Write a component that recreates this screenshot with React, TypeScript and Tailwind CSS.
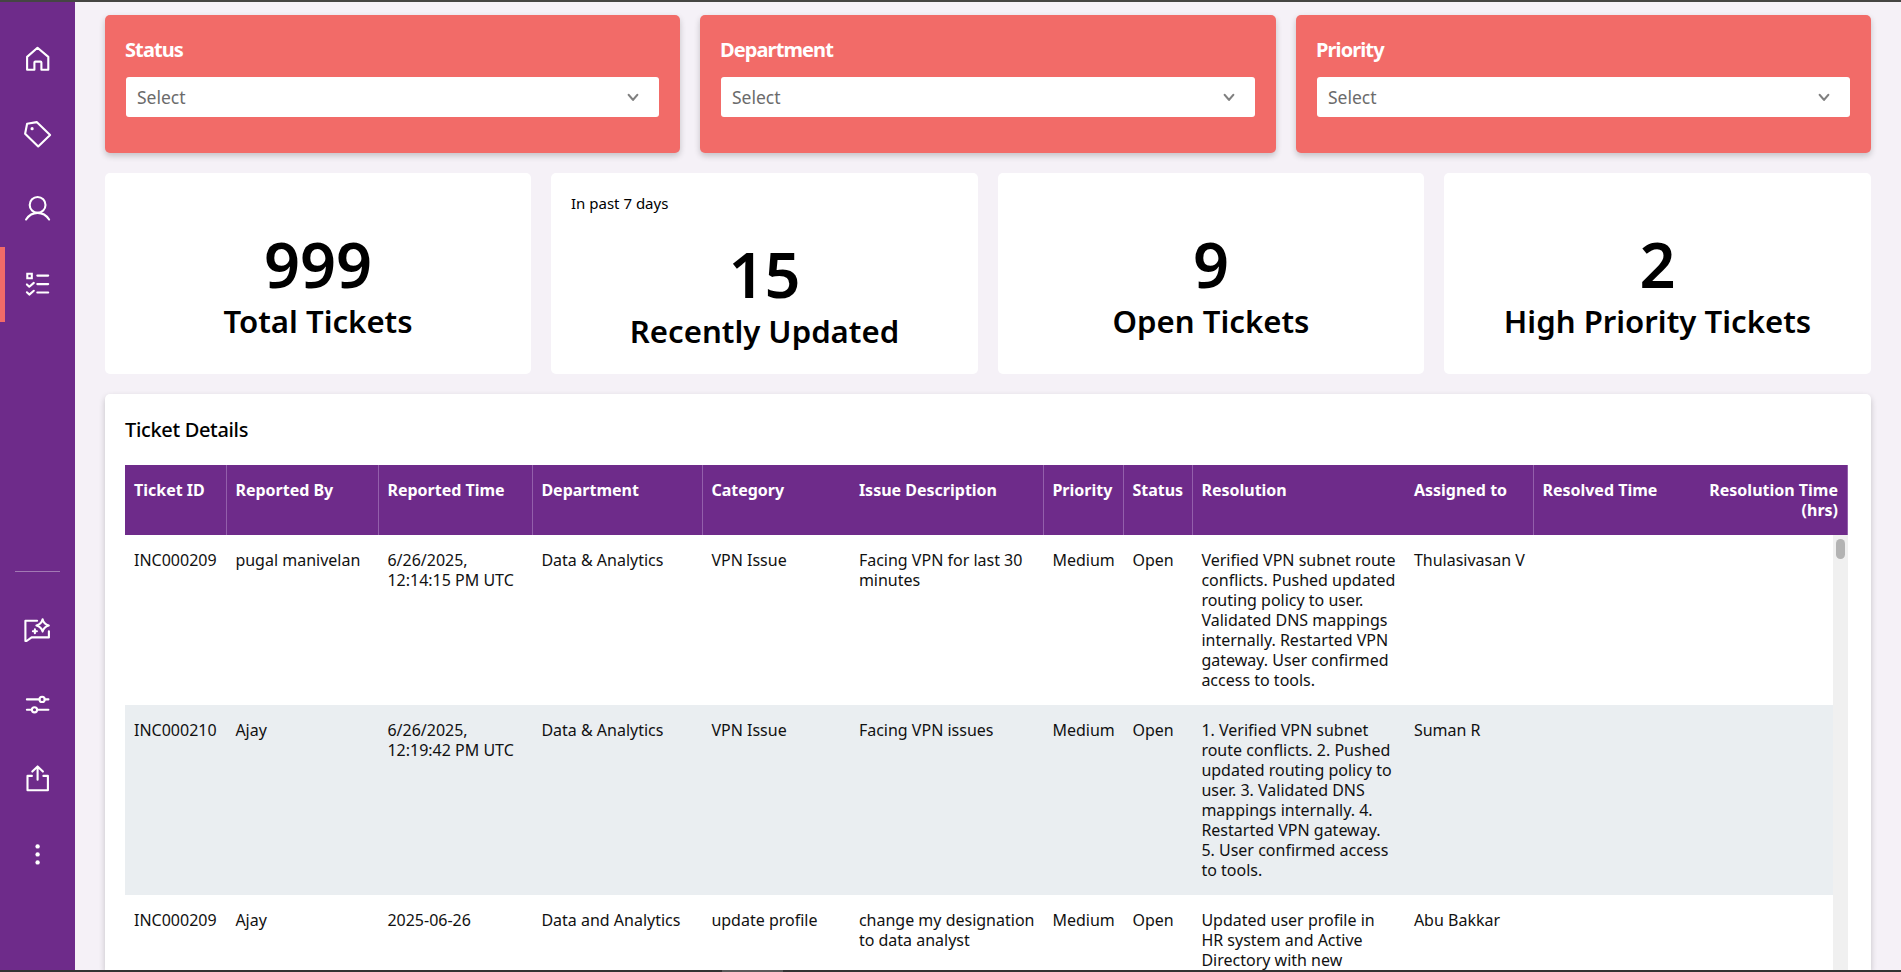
import type { ReactNode } from "react";

function Icon({ children }: { children: ReactNode }) {
  return (
    <svg
      className="h-[30px] w-[31px] overflow-visible"
      viewBox="-0.5 0 31 30"
      fill="none"
      stroke="white"
      strokeWidth="2.1"
      strokeLinecap="round"
      strokeLinejoin="round"
    >
      {children}
    </svg>
  );
}

const HomeIcon = () => (
  <Icon>
    <path d="M15 3.8 4.6 12.9v12.8h7.3v-7.2q0-.9.9-.9h5.2q.9 0 .9.9v7.2h6.9V12.9z" />
  </Icon>
);

const TagIcon = () => (
  <Icon>
    <path d="M4.6 4.7 14.2 3.1 27.6 16 15.7 27.5 2.6 14.7z" />
    <circle cx="9.6" cy="9.7" r="1.6" fill="white" stroke="none" />
  </Icon>
);

const UserIcon = () => (
  <Icon>
    <circle cx="15.1" cy="10.9" r="7.9" />
    <path d="M3.6 25.5C6.4 21.2 10.4 18.9 15.1 18.9s8.7 2.3 11.5 6.6" />
  </Icon>
);

const ListIcon = () => (
  <Icon>
    <path d="M4.8 4.7h4.5v4.6H4.8z" strokeLinejoin="miter" />
    <path d="M14.8 6.6h10.9M14.8 15.1h10.9M14.8 23.5h10.9M4.4 15.4l2.4 2.3 4.5-3.8M4.4 23.3l2.4 2.3 4.5-3.8" />
  </Icon>
);

const ChatSparkleIcon = () => (
  <Icon>
    <path d="M14.6 5.7H2.9v20.2l1.2.1 5-3.6h17.3v-6.1" />
    <path d="M20.1 4.2q1.2 5 6.2 6.2-5 1.2-6.2 6.2-1.2-5-6.2-6.2 5-1.2 6.2-6.2z" />
    <path d="M12.4 14.3v4M10.4 16.3h4" />
  </Icon>
);

const SlidersIcon = () => (
  <Icon>
    <path d="M4.4 9.4h12.5M22.3 9.4h3.6M4.4 19.8h4.9M14.8 19.8h11.1" />
    <circle cx="19.6" cy="9.4" r="2.6" />
    <circle cx="12" cy="19.8" r="2.6" />
  </Icon>
);

const ShareIcon = () => (
  <Icon>
    <path d="M9.4 10.9H5v14.3h20.4V10.9h-4.5M15.1 14.8V1.6M9.8 6.6l5.3-5.2 5.3 5.2" />
  </Icon>
);

const DotsIcon = () => (
  <Icon>
    <g fill="white" stroke="none">
      <circle cx="15.1" cy="6.4" r="2.2" />
      <circle cx="15.1" cy="14.4" r="2.2" />
      <circle cx="15.1" cy="22.4" r="2.2" />
    </g>
  </Icon>
);

function NavItem({ children, active }: { children: ReactNode; active?: boolean }) {
  return (
    <button
      className={
        active
          ? "flex h-[75px] w-[75px] shrink-0 items-center justify-center border-l-[5px] border-[#f26b68] pr-[5px]"
          : "flex h-[75px] w-[75px] shrink-0 items-center justify-center"
      }
    >
      {children}
    </button>
  );
}

function Sidebar() {
  return (
    <nav className="flex w-[75px] shrink-0 flex-col bg-[#6e2b8a] pt-[19.5px] pb-[77.5px]">
      <NavItem><HomeIcon /></NavItem>
      <NavItem><TagIcon /></NavItem>
      <NavItem><UserIcon /></NavItem>
      <NavItem active><ListIcon /></NavItem>
      <div className="mx-[15px] mt-auto mb-[20.5px] h-px shrink-0 bg-[#a279b4]" />
      <NavItem><ChatSparkleIcon /></NavItem>
      <NavItem><SlidersIcon /></NavItem>
      <NavItem><ShareIcon /></NavItem>
      <NavItem><DotsIcon /></NavItem>
    </nav>
  );
}

function FilterCard({ label }: { label: string }) {
  return (
    <section className="h-[138px] rounded-[5px] bg-[#f26b68] px-[21px] pt-5 shadow-[0_3px_6px_rgba(0,0,0,0.2)]">
      <h2 className="-ml-px text-[20px] leading-[30px] font-bold tracking-[-0.9px] text-white">{label}</h2>
      <div className="mt-3 flex h-10 items-center justify-between rounded-[3px] bg-white pr-[19px] pl-[11px]">
        <span className="pt-px text-[17.5px] text-[#6b6b6b]">Select</span>
        <svg className="h-3.5 w-3.5" viewBox="0 0 14 14" fill="none" stroke="#808080" strokeWidth="2.2" strokeLinecap="round" strokeLinejoin="round">
          <path d="M2.7 4.9 7 9.9l4.3-5" />
        </svg>
      </div>
    </section>
  );
}

function StatCard({ value, label, note }: { value: string; label: string; note?: string }) {
  return (
    <section className="flex h-[201px] flex-col rounded-[5px] bg-white px-5 text-center text-black">
      {note ? <p className="mt-5 h-[21px] text-left text-[15px] leading-[21px]">{note}</p> : null}
      <p className={note ? "mt-[22px] text-[63px] leading-[76px] font-semibold" : "mt-[53px] text-[63px] leading-[76px] font-semibold"}>
        {value}
      </p>
      <p className="text-[31.15px] leading-[38px] font-semibold">{label}</p>
    </section>
  );
}

const columns = [
  { label: "Ticket ID", divider: true },
  { label: "Reported By", divider: true },
  { label: "Reported Time", divider: true },
  { label: "Department", divider: true },
  { label: "Category", divider: false },
  { label: "Issue Description", divider: true },
  { label: "Priority", divider: true },
  { label: "Status", divider: true },
  { label: "Resolution", divider: false },
  { label: "Assigned to", divider: true },
  { label: "Resolved Time", divider: false },
];

const rows = [
  ["INC000209", "pugal manivelan", "6/26/2025, 12:14:15 PM UTC", "Data & Analytics", "VPN Issue", "Facing VPN for last 30 minutes", "Medium", "Open", "Verified VPN subnet route conflicts. Pushed updated routing policy to user. Validated DNS mappings internally. Restarted VPN gateway. User confirmed access to tools.", "Thulasivasan V"],
  ["INC000210", "Ajay", "6/26/2025, 12:19:42 PM UTC", "Data & Analytics", "VPN Issue", "Facing VPN issues", "Medium", "Open", "1. Verified VPN subnet route conflicts. 2. Pushed updated routing policy to user. 3. Validated DNS mappings internally. 4. Restarted VPN gateway. 5. User confirmed access to tools.", "Suman R"],
  ["INC000209", "Ajay", "2025-06-26", "Data and Analytics", "update profile", "change my designation to data analyst", "Medium", "Open", "Updated user profile in HR system and Active Directory with new", "Abu Bakkar"],
];

const grid =
  "grid grid-cols-[102px_152px_154px_170px_147.5px_193.5px_80px_69px_212.5px_128.5px_314px]";

function TicketTable() {
  return (
    <div className="flex min-h-0 w-[1723px] flex-1 flex-col text-[16px] leading-5">
      <div className="flex h-[70px] shrink-0 bg-[#6e2b8a] font-bold text-white">
        <div className={grid}>
          {columns.map((c) => (
            <div
              key={c.label}
              className={
                c.divider
                  ? "border-r border-[#935fab] py-[15px] pl-[8.4px] whitespace-nowrap first:pl-[9px]"
                  : c.label === "Resolved Time"
                    ? "flex justify-between border-r border-[#935fab] py-[15px] pr-[9px] pl-[8.4px] whitespace-nowrap"
                    : "py-[15px] pl-[8.4px] whitespace-nowrap"
              }
            >
              {c.label === "Resolved Time" ? (
                <>
                  <span>{c.label}</span>
                  <span className="text-right">
                    Resolution Time
                    <br />
                    (hrs)
                  </span>
                </>
              ) : (
                c.label
              )}
            </div>
          ))}
        </div>
      </div>
      <div className="flex min-h-0 flex-1">
        <div className="w-[1708px] overflow-hidden text-[#111]">
          {rows.map((row, r) => (
            <div key={r} className={r % 2 ? "bg-[#eaeef1]" : "bg-white"}>
              <div className={grid}>
                {row.map((cell, i) => (
                  <div key={i} className="py-[15px] pr-[7.6px] pl-[8.4px] first:pl-[9px]">{cell}</div>
                ))}
              </div>
            </div>
          ))}
        </div>
        <div className="w-[15px] bg-[#f0f0f0] pt-1 pl-[3px]">
          <div className="h-5 w-[9px] rounded-full bg-[#b3b3b3]" />
        </div>
      </div>
    </div>
  );
}

export default function App() {
  return (
    <div className="flex h-[972px] w-[1901px] flex-col overflow-hidden bg-[#f5f1f7] font-['Noto_Sans',sans-serif]">
      <div className="h-0.5 shrink-0 bg-[#454543]" />
      <div className="flex min-h-0 flex-1">
        <Sidebar />
        <main className="flex min-w-0 flex-1 flex-col gap-5 overflow-hidden pt-[13px] pr-[30px] pl-[30px]">
          <div className="grid grid-cols-[575px_576px_575px] gap-5">
            <FilterCard label="Status" />
            <FilterCard label="Department" />
            <FilterCard label="Priority" />
          </div>
          <div className="grid grid-cols-[426px_427px_426px_427px] gap-5">
            <StatCard value="999" label="Total Tickets" />
            <StatCard value="15" label="Recently Updated" note="In past 7 days" />
            <StatCard value="9" label="Open Tickets" />
            <StatCard value="2" label="High Priority Tickets" />
          </div>
          <section className="flex min-h-0 flex-1 flex-col rounded-t-[5px] bg-white px-5 shadow-[0_3px_6px_rgba(0,0,0,0.2)]">
            <h2 className="mt-[21px] mb-5 text-[20px] leading-[30px] font-medium tracking-[-0.33px] text-black">Ticket Details</h2>
            <TicketTable />
          </section>
        </main>
      </div>
      <div className="flex h-0.5 shrink-0 bg-[#333]">
        <div className="ml-[722px] w-[61px] bg-[#5a5a5a]" />
      </div>
    </div>
  );
}
